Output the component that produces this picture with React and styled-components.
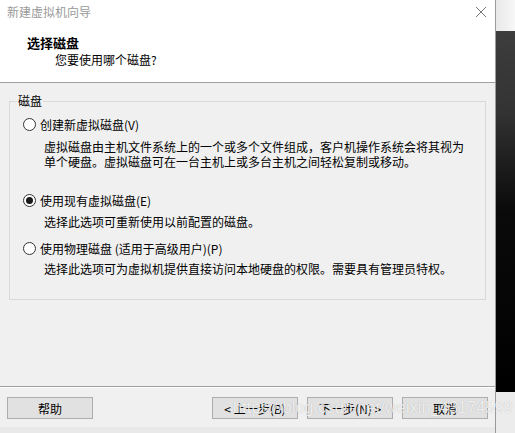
import React from 'react';
import styled, { createGlobalStyle } from 'styled-components';

const Global = createGlobalStyle`
    html, body {
        margin: 0;
        padding: 0;
        background: #f0f0f0;
    }
    * {
        box-sizing: border-box;
    }
`

const font = `"Noto Sans CJK SC", "Microsoft YaHei", sans-serif`

const Screen = styled.div`
    width: 515px;
    height: 433px;
    display: flex;
    overflow: hidden;
    position: relative;
    font-family: ${font};
    font-size: 12px;
    color: #000;
`

const Window = styled.div`
    width: 496px;
    height: 433px;
    display: flex;
    flex-direction: column;
    border-right: 1px solid #9a9a9a;
`

const Header = styled.div`
    height: 83px;
    background: #fff;
    border-bottom: 1px solid #a0a0a0;
    display: flex;
    flex-direction: column;
`

const TitleBar = styled.div`
    height: 24px;
    display: flex;
    align-items: center;
    justify-content: space-between;
    padding: 0 8px 0 7px;
    color: #9a9a9a;
    line-height: 24px;
`

const Close = styled.div`
    width: 12px;
    height: 12px;
    display: flex;
`

const HeadTitle = styled.div`
    font-weight: 700;
    font-size: 13px;
    line-height: 18px;
    margin: 10px 0 0 27px;
`

const HeadSub = styled.div`
    line-height: 16px;
    margin: 0 0 0 55px;
`

const Body = styled.div`
    height: 304px;
    background: #f0f0f0;
    padding: 18px 9px 0 9px;
    border-bottom: 1px solid #a0a0a0;
`

const Group = styled.div`
    position: relative;
    height: 199px;
    width: 477px;
    border: 1px solid #d9d9d9;
    padding: 14px 0 0 13px;
`

const GroupLabel = styled.div`
    position: absolute;
    top: -9px;
    left: 7px;
    padding: 0 1px;
    line-height: 16px;
    background: #f0f0f0;
`

const Option = styled.label`
    display: flex;
    align-items: center;
    height: 16px;
    margin-top: ${p => p.$gap || 0}px;
`

const Radio = styled.span`
    width: 13px;
    height: 13px;
    border-radius: 50%;
    border: 1px solid #333;
    background: #fff;
    display: flex;
    align-items: center;
    justify-content: center;
    margin-right: 4px;

    &::after {
        content: '';
        width: 7px;
        height: 7px;
        border-radius: 50%;
        background: ${p => (p.$checked ? '#1a1a1a' : 'transparent')};
    }
`

const Desc = styled.div`
    margin: ${p => p.$gap || 0}px 0 0 21px;
    line-height: 15px;
    width: 430px;
`

const Footer = styled.div`
    height: 40px;
    background: #f0f0f0;
    border-top: 1px solid #fff;
    display: flex;
    padding: 9px 0 0 7px;
`

const Button = styled.div`
    width: 86px;
    height: 22px;
    border: 1px solid #adadad;
    background: #e1e1e1;
    display: flex;
    align-items: center;
    justify-content: center;
    margin-left: ${p => p.$gap || 0}px;
`

const Shadow = styled.div`
    flex: 1;
    background: #e9e9e9;
`

const Desktop = styled.div`
    flex: 1;
    display: flex;
    flex-direction: column;
`

const DeskTop = styled.div`
    height: 31px;
    background: linear-gradient(to right, #e8e8e8, #f8f8f8);
`

const DeskDark = styled.div`
    height: 361px;
    background: linear-gradient(#3d3d3d 0, #333 80px, #0a0a0a 180px, #000 100%);
`

const DeskBottom = styled.div`
    flex: 1;
    background: #ececec;
`

const Watermark = styled.div`
    position: absolute;
    left: 233px;
    top: 399px;
    font-family: "Liberation Sans", Arial, sans-serif;
    font-size: 16px;
    letter-spacing: 0.2px;
    color: rgba(255, 255, 255, 0.8);
    text-shadow: 0 0 1px rgba(0, 0, 0, 0.25);
    pointer-events: none;
    white-space: nowrap;
`

export default function App() {
    return (
        <Screen>
            <Global />
            <Window>
                <Header>
                    <TitleBar>
                        <span>新建虚拟机向导</span>
                        <Close>
                            <svg width="12" height="12" viewBox="0 0 12 12">
                                <path d="M1 1 L11 11 M11 1 L1 11" stroke="#777" strokeWidth="1" />
                            </svg>
                        </Close>
                    </TitleBar>
                    <HeadTitle>选择磁盘</HeadTitle>
                    <HeadSub>您要使用哪个磁盘?</HeadSub>
                </Header>

                <Body>
                    <Group>
                        <GroupLabel>磁盘</GroupLabel>

                        <Option>
                            <Radio />
                            创建新虚拟磁盘(V)
                        </Option>
                        <Desc $gap={7}>
                            虚拟磁盘由主机文件系统上的一个或多个文件组成，客户机操作系统会将其视为
                            单个硬盘。虚拟磁盘可在一台主机上或多台主机之间轻松复制或移动。
                        </Desc>

                        <Option $gap={23}>
                            <Radio $checked />
                            使用现有虚拟磁盘(E)
                        </Option>
                        <Desc $gap={6}>选择此选项可重新使用以前配置的磁盘。</Desc>

                        <Option $gap={11}>
                            <Radio />
                            使用物理磁盘 (适用于高级用户)(P)
                        </Option>
                        <Desc $gap={5}>选择此选项可为虚拟机提供直接访问本地硬盘的权限。需要具有管理员特权。</Desc>
                    </Group>
                </Body>

                <Footer>
                    <Button>帮助</Button>
                    <Button $gap={119}>&lt; 上一步(B)</Button>
                    <Button $gap={9}>下一步(N) &gt;</Button>
                    <Button $gap={9}>取消</Button>
                </Footer>
                <Shadow />
            </Window>

            <Desktop>
                <DeskTop />
                <DeskDark />
                <DeskBottom />
            </Desktop>

            <Watermark>https://blog.csdn.net/weixin_43174599</Watermark>
        </Screen>
    );
}
